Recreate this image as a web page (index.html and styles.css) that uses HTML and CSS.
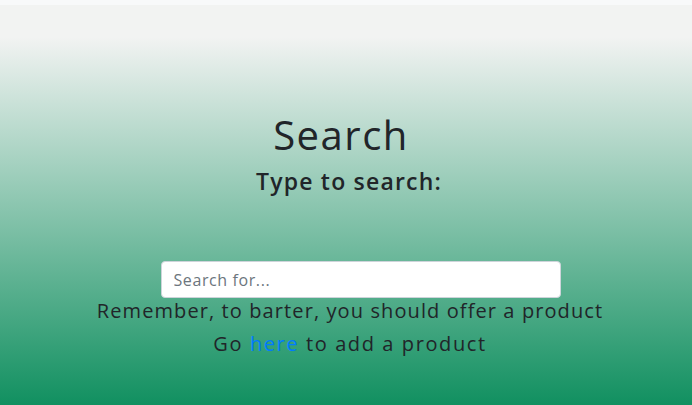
FILE: index.html
```html
<!DOCTYPE html>
<html>
<head>
<meta charset="utf-8">
<link rel="stylesheet" href="styles.css">
</head>
<body>
<div class="topbar"></div>
<main class="page">
  <h1 class="title">Search</h1>
  <p class="subtitle">Type to search:</p>
  <div class="search-wrap">
    <input class="search-input" type="text" placeholder="Search for...">
  </div>
  <p class="note first">Remember, to barter, you should offer a product</p>
  <p class="note second">Go <a href="#" class="link">here</a> to add a product</p>
</main>
</body>
</html>
```
FILE: styles.css
```css
html, body {
  margin: 0;
  padding: 0;
}
body {
  width: 692px;
  height: 405px;
  overflow: hidden;
  font-family: "Open Sans", "Liberation Sans", sans-serif;
  color: #212529;
  background: #f2f3f2;
}
.topbar {
  height: 5px;
  background: #f8f9fa;
}
.page {
  height: 400px;
  box-sizing: border-box;
  background: linear-gradient(to bottom, #f2f3f2 0%, #f2f3f2 8%, #119060 100%);
  display: flex;
  flex-direction: column;
  align-items: center;
  padding-top: 106px;
}
.title {
  margin: 0 0 0 -10px;
  font-size: 40px;
  font-weight: 400;
  line-height: 48px;
  letter-spacing: 1.5px;
}
.subtitle {
  margin: 8px 0 0 6px;
  font-size: 23px;
  line-height: 28px;
  font-weight: 600;
  letter-spacing: 1.2px;
}
.search-wrap {
  margin-top: 66px;
  margin-left: 29px;
}
.search-input {
  box-sizing: border-box;
  width: 400px;
  height: 37px;
  border: 1px solid #ced4da;
  border-radius: 4px;
  padding: 0 12px;
  font-family: inherit;
  font-size: 16px;
  color: #495057;
  background: #fff;
  outline: none;
}
.search-input::placeholder {
  color: #6c757d;
  letter-spacing: 0.6px;
}
.note {
  margin: 3px 0 0 8px;
  font-size: 20px;
  line-height: 30px;
  letter-spacing: 1.1px;
}
.note.first {
  margin-top: -2px;
}
.note.second {
  letter-spacing: 1.6px;
}
.link {
  color: #007bff;
  text-decoration: none;
}
```
